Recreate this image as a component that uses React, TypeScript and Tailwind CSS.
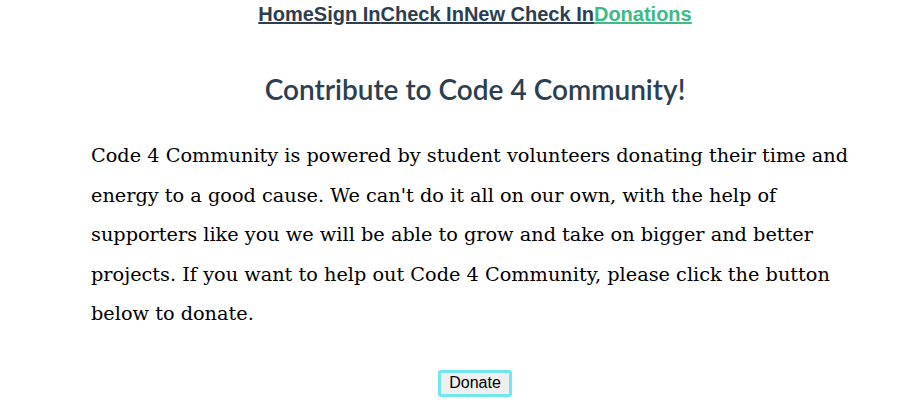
const links = ["Home", "Sign In", "Check In", "New Check In"];

const lines = [
  "Code 4 Community is powered by student volunteers donating their time and",
  "energy to a good cause. We can't do it all on our own, with the help of",
  "supporters like you we will be able to grow and take on bigger and better",
  "projects. If you want to help out Code 4 Community, please click the button",
  "below to donate.",
];

export default function App() {
  return (
    <div className="w-[921px] h-[416px] bg-white text-[#2c3e50]">
      <nav className="flex justify-center pl-[29px] pt-[3px] font-['Liberation_Sans',Arial,sans-serif] text-[20px] font-bold leading-[23px]">
        {links.map((l) => (
          <a key={l} href="#" className="underline">
            {l}
          </a>
        ))}
        <a href="#" className="underline text-[#42b983]">
          Donations
        </a>
      </nav>

      <h1 className="mt-[45px] pl-[29px] text-center font-['Lato',sans-serif] text-[28px] font-semibold leading-[36px]">
        Contribute to Code 4 Community!
      </h1>

      <p className="mt-[29px] ml-[91px] font-['DejaVu_Serif',serif] text-[19.3px] leading-[39.6px] text-black whitespace-nowrap">
        {lines.map((t, i) => (
          <span key={i} className="block">
            {t}
          </span>
        ))}
      </p>

      <div className="flex justify-center pl-[29px] mt-[36px]">
        <button className="w-[74px] h-[27px] rounded-[3px] border-[3px] border-[#6ee7ee] bg-[#efefef] font-['Liberation_Sans',Arial,sans-serif] text-[16px] leading-none text-black">
          Donate
        </button>
      </div>
    </div>
  );
}
